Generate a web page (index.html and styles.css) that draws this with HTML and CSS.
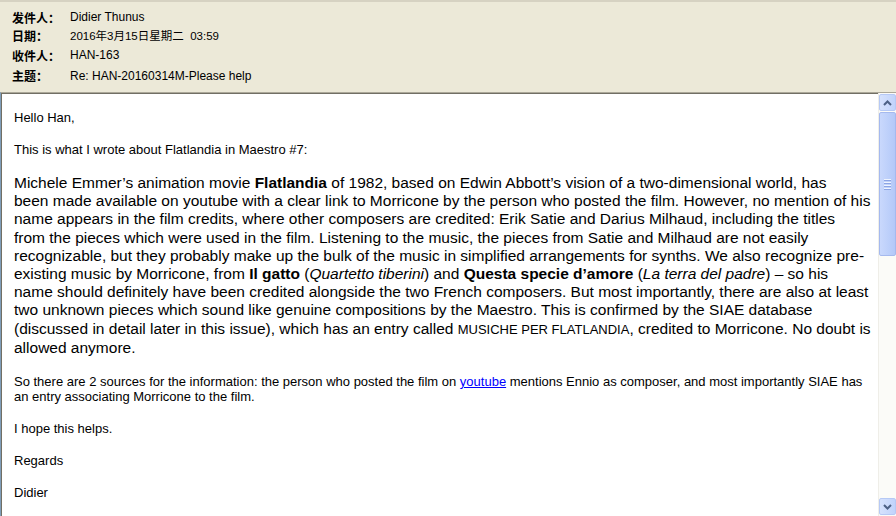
FILE: index.html
```html
<!DOCTYPE html>
<html>
<head>
<meta charset="utf-8">
<link rel="stylesheet" href="styles.css">
</head>
<body>
<div class="window">
  <div class="header">
    <div class="hrow r1"><span class="lbl">发件人：</span><span class="val">Didier Thunus</span></div>
    <div class="hrow r2"><span class="lbl">日期：</span><span class="val date">2016年3月15日星期二&nbsp; 03:59</span></div>
    <div class="hrow r3"><span class="lbl">收件人：</span><span class="val">HAN-163</span></div>
    <div class="hrow r4"><span class="lbl">主题：</span><span class="val">Re: HAN-20160314M-Please help</span></div>
  </div>
  <div class="message">
    <div class="content">
      <p class="small">Hello Han,</p>
      <p class="small">This is what I wrote about Flatlandia in Maestro #7:</p>
      <p class="big">Michele Emmer’s animation movie <b>Flatlandia</b> of 1982, based on Edwin Abbott’s vision of a two-dimensional world, has<br>been made available on youtube with a clear link to Morricone by the person who posted the film. However, no mention of his<br>name appears in the film credits, where other composers are credited: Erik Satie and Darius Milhaud, including the titles<br>from the pieces which were used in the film. Listening to the music, the pieces from Satie and Milhaud are not easily<br>recognizable, but they probably make up the bulk of the music in simplified arrangements for synths. We also recognize pre-<br>existing music by Morricone, from <b>Il gatto</b> (<i>Quartetto tiberini</i>) and <b>Questa specie d’amore</b> (<i>La terra del padre</i>) – so his<br>name should definitely have been credited alongside the two French composers. But most importantly, there are also at least<br>two unknown pieces which sound like genuine compositions by the Maestro. This is confirmed by the SIAE database<br>(discussed in detail later in this issue), which has an entry called <span class="caps">MUSICHE PER FLATLANDIA</span>, credited to Morricone. No doubt is<br>allowed anymore.</p>
      <p class="small">So there are 2 sources for the information: the person who posted the film on <a href="#" class="link">youtube</a> mentions Ennio as composer, and most importantly SIAE has<br>an entry associating Morricone to the film.</p>
      <p class="small">I hope this helps.</p>
      <p class="small">Regards</p>
      <p class="small">Didier</p>
    </div>
    <div class="scrollbar">
      <div class="sbtn">
        <svg width="9" height="6" viewBox="0 0 9 6"><path d="M1 5 L4.5 1.5 L8 5" fill="none" stroke="#4d6185" stroke-width="2"/></svg>
      </div>
      <div class="thumb">
        <div class="grip"><span></span><span></span><span></span><span></span></div>
      </div>
      <div class="track"></div>
      <div class="sbtn">
        <svg width="9" height="6" viewBox="0 0 9 6"><path d="M1 1 L4.5 4.5 L8 1" fill="none" stroke="#4d6185" stroke-width="2"/></svg>
      </div>
    </div>
  </div>
</div>
</body>
</html>
```
FILE: styles.css
```css
html, body {
  margin: 0;
  padding: 0;
}
body {
  width: 896px;
  height: 516px;
  overflow: hidden;
  font-family: "Liberation Sans", Arial, sans-serif;
  color: #000;
}
.window {
  display: flex;
  flex-direction: column;
  height: 516px;
}
.header {
  height: 92px;
  box-sizing: border-box;
  background: #ece9d8;
  border-top: 2px solid #d6d2c2;
  padding: 6px 0 0 12px;
  display: grid;
  grid-template-rows: 18px 18px 22px 19px;
}
.hrow {
  display: flex;
  align-items: center;
}
.lbl {
  width: 58px;
  font-family: "Noto Sans CJK SC", sans-serif;
  font-weight: bold;
  font-size: 12px;
}
.val {
  font-size: 12px;
}
.val.date {
  font-family: "Liberation Sans", "Noto Sans CJK SC", sans-serif;
  font-size: 11.5px;
}
.message {
  flex: 1;
  display: flex;
  min-height: 0;
  border-top: 1px solid #aca899;
  border-left: 1px solid #7f9db9;
  background: #fff;
}
.content {
  flex: 1;
  border-top: 1px solid #716f64;
  border-left: 1px solid #716f64;
  padding: 16px 0 0 12px;
  overflow: hidden;
  white-space: nowrap;
}
.content p {
  margin: 0 0 17px 0;
}
.small {
  font-size: 13px;
  line-height: 15px;
}
.big {
  font-size: 15.5px;
  line-height: 18.2px;
}
.caps {
  font-size: 13px;
}
.link {
  color: #0000ff;
  text-decoration: underline;
}
.scrollbar {
  width: 17px;
  display: flex;
  flex-direction: column;
  padding: 1px 0 1px 0;
  background: #fbfbf8;
  border-left: 1px solid #efeee8;
}
.sbtn {
  height: 15px;
  margin: 0 0 1px 0;
  border: 1px solid #b6c9f5;
  border-radius: 2px;
  background: linear-gradient(to right, #d6e2fd, #c1d3fb);
  display: flex;
  align-items: center;
  justify-content: center;
}
.sbtn:last-child {
  margin: 0;
}
.thumb {
  height: 142px;
  border: 1px solid #a5b9ee;
  border-radius: 2px;
  background: linear-gradient(to right, #c9d8fc, #bccffa 60%, #b4c8f8);
  display: flex;
  align-items: center;
  justify-content: center;
}
.grip {
  display: flex;
  flex-direction: column;
  gap: 1px;
}
.grip span {
  display: block;
  width: 7px;
  height: 1px;
  background: #eef3fe;
  border-bottom: 1px solid #8ca4e4;
}
.track {
  flex: 1;
}
```
